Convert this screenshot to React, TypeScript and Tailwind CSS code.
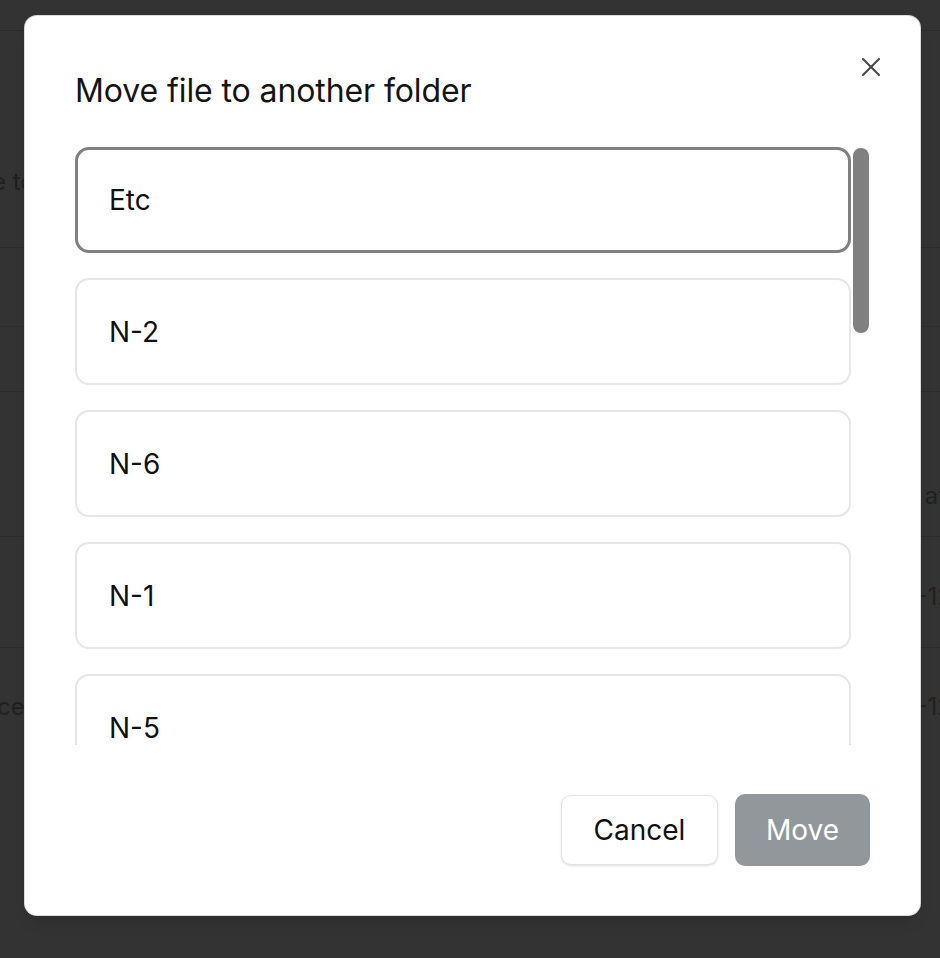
const folders = ['Etc', 'N-2', 'N-6', 'N-1', 'N-5', 'N-3', 'N-4'];

function CloseIcon() {
  return (
    <svg width="20" height="20" viewBox="0 0 20 20" fill="none" stroke="#4a4a4a" strokeWidth="2.2" strokeLinecap="round">
      <line x1="2" y1="2" x2="18" y2="18" />
      <line x1="18" y1="2" x2="2" y2="18" />
    </svg>
  );
}

function BackdropPage() {
  // faint page behind the overlay, mostly hidden by the modal
  return (
    <div className="flex flex-col w-full text-[24px] leading-[28px] text-[#202020]">
      <div className="h-[31px] border-b border-[#2b2b2b]" />
      <div className="h-[217px] border-b border-[#2b2b2b] flex items-end pb-[51px]">
        <div className="ml-[-8px] whitespace-nowrap">e to</div>
      </div>
      <div className="h-[79px] border-b border-[#2e2e2e]" />
      <div className="h-[65px] border-b border-[#2b2b2b]" />
      <div className="h-[145px] border-b border-[#2b2b2b] flex items-end justify-end pb-[26px]">
        <div className="mr-[-6px] whitespace-nowrap">at</div>
      </div>
      <div className="h-[111px] border-b border-[#2b2b2b] flex items-center justify-end pt-[10px]">
        <div className="mr-[-12px] whitespace-nowrap">-12</div>
      </div>
      <div className="h-[118px] flex items-center justify-between">
        <div className="ml-[-3px] whitespace-nowrap">ce</div>
        <div className="mr-[-12px] whitespace-nowrap">-12</div>
      </div>
    </div>
  );
}

export default function App() {
  return (
    <div className="relative w-[940px] h-[958px] overflow-hidden bg-[#333333] font-['Inter','Liberation_Sans',sans-serif]">
      <BackdropPage />

      {/* Modal */}
      <div className="absolute left-[25px] top-[16px] w-[895px] h-[899px] bg-white rounded-[12px] ring-1 ring-[#dcdcdc] shadow-lg flex flex-col px-[50px] pt-[59px] pb-[49px]">
        <button className="absolute right-[39px] top-[41px] w-[20px] h-[20px] flex items-center justify-center">
          <CloseIcon />
        </button>

        <h2 className="text-[32px] leading-[32px] text-[#141414] font-normal tracking-[-0.1px]">Move file to another folder</h2>

        <div className="mt-[40px] flex gap-[2px] h-[598px]">
          <div className="w-[776px] h-[598px] overflow-hidden flex flex-col gap-[25px]">
            {folders.map((name, idx) => (
              <div
                key={name}
                className={
                  idx === 0
                    ? 'shrink-0 h-[106px] rounded-[14px] border-[3px] border-[#808080] flex items-center pl-[31px] text-[28px] text-[#111]'
                    : 'shrink-0 h-[107px] rounded-[14px] border-2 border-[#e6e6e6] flex items-center pl-[32px] text-[28px] text-[#111]'
                }
              >
                {name}
              </div>
            ))}
          </div>
          <div className="w-[16px] pt-[1px]">
            <div className="h-[185px] w-[16px] rounded-full bg-[#808080]" />
          </div>
        </div>

        <div className="mt-auto flex justify-end items-center gap-[17px]">
          <button className="w-[157px] h-[70px] rounded-[10px] border-[1.5px] border-[#e3e3e3] bg-white shadow-sm text-[28px] text-[#111]">
            Cancel
          </button>
          <button className="w-[135px] h-[72px] rounded-[10px] bg-[#91979a] text-[28px] text-white">
            Move
          </button>
        </div>
      </div>
    </div>
  );
}
